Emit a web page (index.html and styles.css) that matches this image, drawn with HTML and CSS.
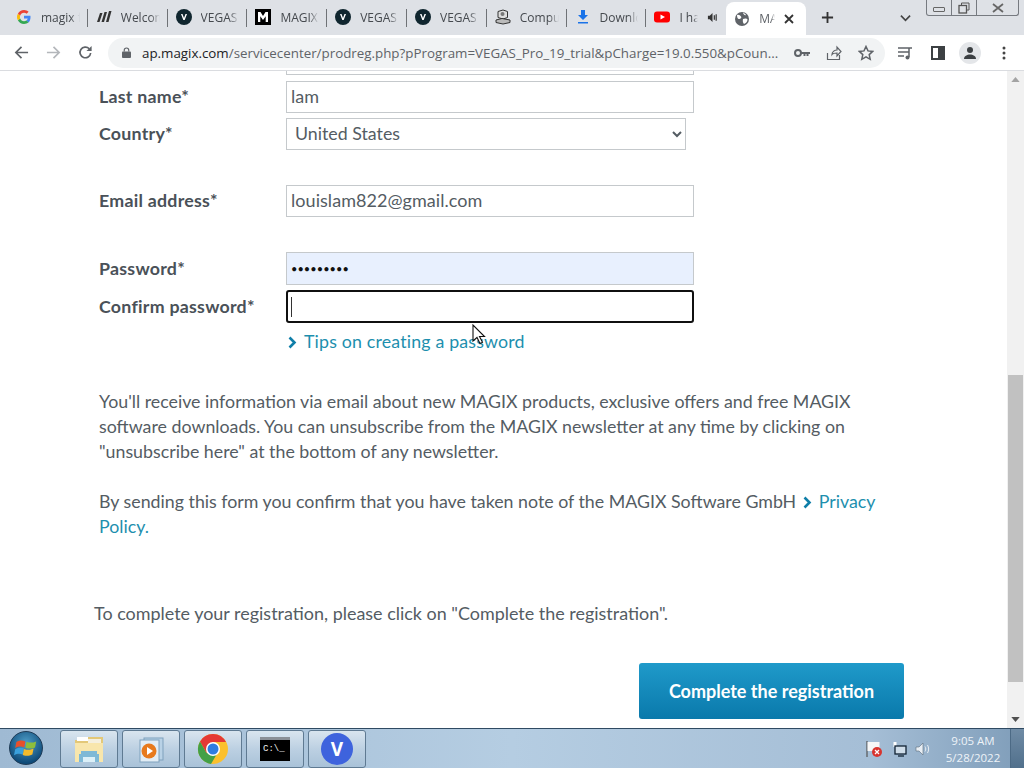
FILE: index.html
```html
<!DOCTYPE html>
<html lang="en">
<head>
  <meta charset="UTF-8">
  <title>MAGIX registration</title>
  <link rel="stylesheet" href="styles.css">
</head>
<body>

  <!-- tab strip -->
  <div class="tabstrip">
    <div class="tab">
      <svg class="favicon" viewBox="0 0 16 16"><path d="M14.5 8.2c0-.5 0-1-.1-1.4H8v2.8h3.7c-.2.9-.7 1.600-1.400 2.100l2.200 1.700c1.300-1.200 2-3 2-5.200z" fill="#4285f4"/><path d="M8 15c1.900 0 3.400-.6 4.500-1.700l-2.200-1.700c-.6.4-1.400.7-2.300.7-1.800 0-3.300-1.200-3.800-2.800L1.900 11.200C3 13.500 5.300 15 8 15z" fill="#34a853"/><path d="M4.200 9.500C4 9 3.900 8.500 3.900 8s.1-1 .3-1.500L1.900 4.800C1.300 5.800 1 6.900 1 8s.3 2.200.9 3.200z" fill="#fbbc05"/><path d="M8 3.800c1 0 1.900.3 2.600 1l2-2C11.400 1.700 9.900 1 8 1 5.300 1 3 2.500 1.900 4.800l2.300 1.700C4.700 5 6.200 3.800 8 3.800z" fill="#ea4335"/></svg>
      <span class="tab-title">magix free</span>
    </div>
    <div class="tab">
      <svg class="favicon" viewBox="0 0 16 16"><path d="M1 13 4 4h2.500L3.500 13zM5.500 13l3-10H11L8 13zM10 13l3-11h2.500L12.500 13z" fill="#333"/></svg>
      <span class="tab-title">Welcome</span>
    </div>
    <div class="tab">
      <svg class="favicon" viewBox="0 0 16 16"><circle cx="8" cy="8" r="8" fill="#10262f"/><path d="M5 5h1.500L8 9l1.500-4H11l-2.300 6H7.300z" fill="#fff"/></svg>
      <span class="tab-title">VEGAS Pro</span>
    </div>
    <div class="tab">
      <svg class="favicon" viewBox="0 0 16 16"><rect width="16" height="16" fill="#000"/><path d="M3 13V3h2.500L8 7l2.500-4H13v10h-2.300V7.200L8 11 5.300 7.200V13z" fill="#fff"/></svg>
      <span class="tab-title">MAGIX Soft</span>
    </div>
    <div class="tab">
      <svg class="favicon" viewBox="0 0 16 16"><circle cx="8" cy="8" r="8" fill="#10262f"/><path d="M5 5h1.500L8 9l1.500-4H11l-2.300 6H7.300z" fill="#fff"/></svg>
      <span class="tab-title">VEGAS Pro</span>
    </div>
    <div class="tab">
      <svg class="favicon" viewBox="0 0 16 16"><circle cx="8" cy="8" r="8" fill="#10262f"/><path d="M5 5h1.500L8 9l1.500-4H11l-2.300 6H7.300z" fill="#fff"/></svg>
      <span class="tab-title">VEGAS Pro</span>
    </div>
    <div class="tab">
      <svg class="favicon" viewBox="0 0 16 16"><path d="M3 2.500 8 1l4.500 1.500v6L8 10 3 8.500z" fill="#ddd" stroke="#333"/><circle cx="7.500" cy="5" r="2" fill="#777"/><path d="M1 11l6-1.500 8 1.500v2.500L8 15l-7-1.500z" fill="#bbb" stroke="#333"/></svg>
      <span class="tab-title">Computer</span>
    </div>
    <div class="tab">
      <svg class="favicon" viewBox="0 0 16 16"><path d="M6 1h4v5h3L8 11 3 6h3zM3 13h10v1.500H3z" fill="#1a73e8"/></svg>
      <span class="tab-title">Downloads</span>
    </div>
    <div class="tab tab-audio">
      <svg class="favicon" viewBox="0 0 16 16"><rect y="2.500" width="16" height="11" rx="3" fill="#f00"/><path d="M6.500 5.500 11 8l-4.500 2.500z" fill="#fff"/></svg>
      <span class="tab-title">I have</span>
      <svg class="tab-speaker" viewBox="0 0 12 12"><path d="M1 4h2l3-3v10L3 8H1z" fill="#333"/><path d="M8 3.500v5M10 2.500v7" stroke="#333" stroke-width="1.300"/></svg>
    </div>
    <div class="tab tab-active">
      <svg class="favicon" viewBox="0 0 16 16"><circle cx="8" cy="8" r="7" fill="#5f6368"/><path d="M3 4c2-.5 3 .5 4 1.500S6.500 8 5 8 3 6 3 4zM9 8c2-1 4-.5 4.500.5 0 2-1.500 4-3.500 4.500-1-1-1.500-3-1-5zM9 1.500c1 .5 2 1 3 2.500-1 .5-2.500 0-3-2.500z" fill="#fff"/></svg>
      <span class="tab-title">MAGIX</span>
      <svg class="tab-close" viewBox="0 0 10 10"><path d="M1 1l8 8M9 1l-8 8" stroke="#333" stroke-width="1.800"/></svg>
    </div>
    <svg class="new-tab" viewBox="0 0 14 14"><path d="M7 1v12M1 7h12" stroke="#333" stroke-width="2"/></svg>
    <svg class="tab-search" viewBox="0 0 12 8"><path d="M1 1.500l5 5 5-5" fill="none" stroke="#444" stroke-width="1.800"/></svg>
    <div class="window-controls">
      <div class="wc wc-min"><span class="wc-min-bar"></span></div>
      <div class="wc wc-max">
        <svg viewBox="0 0 12 12" width="12" height="12"><path d="M3.500 3.500V1h7.500v7H8.500" fill="none" stroke="#555"/><rect x="1" y="3.500" width="7.500" height="7.500" fill="none" stroke="#555" stroke-width="1.300"/></svg>
      </div>
      <div class="wc wc-close">
        <svg viewBox="0 0 12 10" width="12" height="10"><path d="M1 1l10 8M11 1L1 9" stroke="#666" stroke-width="1.800"/></svg>
      </div>
    </div>
  </div>

  <!-- toolbar -->
  <div class="toolbar">
    <svg class="tool tool-back" viewBox="0 0 16 16"><path d="M15 8H2M8 2 2 8l6 6" fill="none" stroke="#5f6368" stroke-width="1.800"/></svg>
    <svg class="tool tool-fwd" viewBox="0 0 16 16"><path d="M1 8h13M8 2l6 6-6 6" fill="none" stroke="#b4b7bb" stroke-width="1.800"/></svg>
    <svg class="tool tool-reload" viewBox="0 0 16 16"><path d="M13.500 8.500A5.700 5.700 0 1 1 12 4" fill="none" stroke="#5f6368" stroke-width="1.800"/><path d="M14.500 1v5.500H9z" fill="#5f6368"/></svg>
    <div class="omnibox">
      <svg class="omni-lock" viewBox="0 0 10 12"><path d="M2.500 5V3.500a2.500 2.500 0 0 1 5 0V5" fill="none" stroke="#5f6368" stroke-width="1.300"/><rect y="5" width="10" height="7" rx="1" fill="#5f6368"/></svg>
      <span class="omni-url"><span class="omni-host">ap.magix.com</span>/servicecenter/prodreg.php?pProgram=VEGAS_Pro_19_trial&amp;pCharge=19.0.550&amp;pCoun...</span>
      <svg class="omni-icon" viewBox="0 0 16 10" width="16" height="10"><circle cx="4" cy="5" r="3" fill="none" stroke="#5f6368" stroke-width="2"/><path d="M7 4h9v2h-1.500v2H12.500V6h-1v2H9.500V6H7z" fill="#5f6368"/></svg>
      <svg class="omni-icon" viewBox="0 0 16 16" width="16" height="16"><path d="M1.500 8v6.500h12V10M6 9.500c0-3 3-4.500 5-4.500V2l4 4.500-4 4.500V8c-2 0-4 0-5 1.500z" fill="none" stroke="#5f6368" stroke-width="1.200"/></svg>
      <svg class="omni-icon omni-star" viewBox="0 0 16 16" width="16" height="16"><path d="M8 1.500l2 4.400 4.700.5-3.500 3.200 1 4.700L8 11.900l-4.200 2.400 1-4.700L1.300 6.400 6 5.900z" fill="none" stroke="#5f6368" stroke-width="1.500"/></svg>
    </div>
    <svg class="tool tool-media" viewBox="0 0 16 16"><path d="M1 3h11M1 7h11M1 11h6" stroke="#5f6368" stroke-width="1.500"/><path d="M12 3h3M12 3v9" stroke="#5f6368" stroke-width="1.500"/><circle cx="10.500" cy="12.500" r="2" fill="#5f6368"/></svg>
    <svg class="tool tool-panel" viewBox="0 0 14 14"><rect x="1" y="1" width="12" height="12" fill="none" stroke="#3c4043" stroke-width="2"/><rect x="7" y="1" width="6" height="12" fill="#3c4043"/></svg>
    <div class="avatar">
      <svg viewBox="0 0 14 14" width="14" height="14"><circle cx="7" cy="4" r="3" fill="#3c4043"/><path d="M1 13c0-3 3-4.500 6-4.500s6 1.500 6 4.500z" fill="#3c4043"/></svg>
    </div>
    <svg class="tool tool-menu" viewBox="0 0 4 14"><circle cx="2" cy="2" r="1.500" fill="#444"/><circle cx="2" cy="7" r="1.500" fill="#444"/><circle cx="2" cy="12" r="1.500" fill="#444"/></svg>
  </div>

  <!-- page -->
  <div class="viewport">
    <div class="page">
      <div class="field-row row-cut">
        <span></span>
        <div class="cut-input"></div>
      </div>
      <div class="field-row row-last">
        <label class="field-label">Last name*</label>
        <input class="text-input" type="text" value="lam">
      </div>
      <div class="field-row row-country">
        <label class="field-label">Country*</label>
        <select class="select-input"><option>United States</option></select>
      </div>
      <div class="field-row row-email">
        <label class="field-label">Email address*</label>
        <input class="text-input" type="text" value="louislam822@gmail.com">
      </div>
      <div class="field-row row-pass">
        <label class="field-label">Password*</label>
        <input class="text-input input-autofill" type="password" value="123456789">
      </div>
      <div class="field-row row-confirm">
        <label class="field-label">Confirm password*</label>
        <div class="focus-input"><span class="caret"></span></div>
      </div>
      <div class="field-row row-tips">
        <span></span>
        <a class="link" href="#"><svg class="chev" viewBox="0 0 9 13" width="9" height="13"><path d="M1.500 1.500 6.500 6.500l-5 5" fill="none" stroke="#0f7ea8" stroke-width="2.600"/></svg>Tips on creating a password</a>
      </div>

      <p class="copy copy-first">You'll receive information via email about new MAGIX products, exclusive offers and free MAGIX software downloads. You can unsubscribe from the MAGIX newsletter at any time by clicking on "unsubscribe here" at the bottom of any newsletter.</p>
      <p class="copy copy-second">By sending this form you confirm that you have taken note of the MAGIX Software GmbH <a class="link" href="#"><svg class="chev" viewBox="0 0 9 13" width="9" height="13"><path d="M1.500 1.500 6.500 6.500l-5 5" fill="none" stroke="#0f7ea8" stroke-width="2.600"/></svg>Privacy Policy.</a></p>
      <p class="complete-note">To complete your registration, please click on "Complete the registration".</p>
      <div class="actions">
        <button class="submit-btn">Complete the registration</button>
      </div>

      <svg class="mouse-cursor" viewBox="0 0 14 22" width="14" height="22"><path d="M1 1v16l4-3.500 3 6 2.500-1.200-3-5.800h5z" fill="#fff" stroke="#111" stroke-width="1.100"/></svg>
    </div>
    <div class="scrollbar">
      <svg class="scroll-arrow" viewBox="0 0 10 6" width="9" height="5"><path d="M0 6l5-6 5 6z" fill="#a3a3a3"/></svg>
      <div class="scroll-track"><div class="scroll-thumb"></div></div>
      <svg class="scroll-arrow" viewBox="0 0 10 6" width="9" height="5"><path d="M0 0l5 6 5-6z" fill="#505050"/></svg>
    </div>
  </div>

  <!-- windows taskbar -->
  <div class="taskbar">
    <div class="start-orb">
      <svg viewBox="0 0 20 20" width="24" height="24"><path d="M2 5c3-1.500 5-1.500 7.500-.5L8.500 9.500C6 8.500 4 8.500 1 10z" fill="#e8502a"/><path d="M10.500 4.800c2.500 1 5 1 8 -.3l-1 5c-3 1.300-5 1.300-8 .3z" fill="#8dbf3c"/><path d="M1 11c3-1.500 5-1.500 7.300-.5l-1 5C5 14.500 3 14.500 0 16z" fill="#3aa0dc"/><path d="M8.300 10.800c3 1 5 1 8-.3l-1 5c-3 1.300-5 1.300-8 .3z" fill="#f4bb2c"/></svg>
    </div>
    <div class="task-btn">
      <svg viewBox="0 0 32 30" width="32" height="30"><path d="M2 6h10l2-3h16v24H2z" fill="#e3c878"/><rect x="4" y="3" width="11" height="4" fill="#fff"/><rect x="15" y="5" width="13" height="4" fill="#f5f0de"/><rect x="2" y="9" width="28" height="19" fill="#f8e6ac"/><path d="M8 17h16v3H8zM6 20h20v8H6z" fill="#7fb9d6"/><rect x="10" y="23" width="12" height="5" fill="#dcf0f8"/></svg>
    </div>
    <div class="task-btn">
      <svg viewBox="0 0 28 28" width="28" height="28"><rect x="7" y="3" width="19" height="22" fill="#b9d2e6" stroke="#7fa1bd"/><rect x="3" y="5" width="19" height="22" fill="#e2edf5" stroke="#7fa1bd"/><circle cx="12" cy="16" r="7.500" fill="#e77a1d"/><path d="M10 12l6 4-6 4z" fill="#fff"/></svg>
    </div>
    <div class="task-btn">
      <svg viewBox="0 0 32 32" width="32" height="32"><circle cx="16" cy="16" r="15" fill="#fbc02d"/><path d="M16 1a15 15 0 0 0-13 7.500L9.500 20 16 9h13A15 15 0 0 0 16 1z" fill="#e53935"/><path d="M3 8.500A15 15 0 0 0 14 31l6.500-11H9.500z" fill="#43a047"/><circle cx="16" cy="16" r="7" fill="#fff"/><circle cx="16" cy="16" r="5.500" fill="#2f7de1"/></svg>
    </div>
    <div class="task-btn">
      <div class="cmd-icon">C:\_</div>
    </div>
    <div class="task-btn">
      <div class="vegas-icon">V</div>
    </div>
    <div class="tray">
      <svg viewBox="0 0 18 18" width="18" height="18"><path d="M2 1v16" stroke="#555" stroke-width="1.200"/><path d="M2.500 2h12v9h-12z" fill="#f7f7f7"/><circle cx="12" cy="12" r="5" fill="#d8342f"/><path d="M10 10l4 4M14 10l-4 4" stroke="#fff" stroke-width="1.300"/></svg>
      <svg viewBox="0 0 16 16" width="16" height="16"><path d="M4 1v5" stroke="#fff" stroke-width="3"/><rect x="4" y="5" width="11" height="8" fill="#cfdde9" stroke="#123" stroke-width="1.300"/><path d="M7 15h6" stroke="#123" stroke-width="1.300"/></svg>
      <svg viewBox="0 0 16 14" width="16" height="14"><path d="M1 5h3l4-4v12l-4-4H1z" fill="#e8eef4" stroke="#5b6b7a" stroke-width=".6"/><path d="M10 4.500c1 1.500 1 3.500 0 5M12.500 3c1.500 2.500 1.500 5.500 0 8" fill="none" stroke="#e8eef4" stroke-width="1"/></svg>
    </div>
    <div class="clock">
      <div>9:05 AM</div>
      <div>5/28/2022</div>
    </div>
    <div class="show-desktop"></div>
  </div>

</body>
</html>
```
FILE: styles.css
```css
* {
  margin: 0;
  padding: 0;
  box-sizing: border-box;
}

body {
  width: 1024px;
  height: 768px;
  display: flex;
  flex-direction: column;
  overflow: hidden;
  background: #fff;
  font-family: 'Lato', sans-serif;
}

/* Tab strip */
.tabstrip {
  position: relative;
  height: 35px;
  flex: none;
  display: flex;
  align-items: center;
  padding-left: 8px;
  background: #dee1e6;
}

.tab {
  position: relative;
  width: 79.8px;
  height: 35px;
  flex: none;
  display: flex;
  align-items: center;
  gap: 9px;
  padding: 0 8px 1px 8px;
}

.tab::after {
  content: "";
  position: absolute;
  right: 0;
  top: 9px;
  height: 18px;
  width: 1px;
  background: #6f7276;
}

.tab-audio::after,
.tab-active::after {
  display: none;
}

.favicon {
  width: 16px;
  height: 16px;
  flex: none;
}

.tab-title {
  flex: 1;
  min-width: 0;
  overflow: hidden;
  white-space: nowrap;
  font-family: 'Open Sans', sans-serif;
  font-size: 12px;
  color: #45494e;
  -webkit-mask-image: linear-gradient(90deg, #000 75%, transparent);
  mask-image: linear-gradient(90deg, #000 75%, transparent);
}

.tab-speaker {
  width: 11px;
  height: 11px;
  flex: none;
}

.tab-active {
  background: #fff;
  border-radius: 8px 8px 0 0;
  height: 33px;
  margin-top: 2px;
  padding-bottom: 0;
}

.tab-active .tab-title {
  color: #5f6368;
}

.tab-close {
  width: 10px;
  height: 10px;
  flex: none;
  margin-right: 4px;
}

.new-tab {
  width: 13px;
  height: 13px;
  margin-left: 15px;
  flex: none;
}

.tab-search {
  width: 11px;
  height: 8px;
  margin-left: 66px;
  flex: none;
}

.window-controls {
  position: absolute;
  top: 0;
  right: 5px;
  height: 16px;
  display: flex;
  border: 1px solid #767a80;
  border-top: none;
  border-radius: 0 0 3px 3px;
}

.wc {
  display: flex;
  align-items: center;
  justify-content: center;
}

.wc-min {
  width: 25px;
  border-right: 1px solid #767a80;
}

.wc-min-bar {
  width: 12px;
  height: 5px;
  border: 1px solid #666;
  border-radius: 1px;
  margin-top: 3px;
}

.wc-max {
  width: 25px;
  border-right: 1px solid #767a80;
}

.wc-close {
  width: 41px;
}

/* Toolbar */
.toolbar {
  height: 36px;
  flex: none;
  display: flex;
  align-items: center;
  background: #fff;
  border-bottom: 1px solid #dadce0;
}

.tool {
  flex: none;
}

.tool-back {
  width: 15px;
  height: 15px;
  margin-left: 14px;
}

.tool-fwd {
  width: 15px;
  height: 15px;
  margin-left: 17px;
}

.tool-reload {
  width: 15px;
  height: 15px;
  margin-left: 17px;
}

.omnibox {
  width: 777px;
  height: 30px;
  margin-left: 15px;
  flex: none;
  display: flex;
  align-items: center;
  padding-left: 14px;
  border-radius: 15px;
  background: #f1f3f4;
}

.omni-lock {
  width: 9px;
  height: 11px;
  flex: none;
}

.omni-url {
  width: 636px;
  margin-left: 11px;
  flex: none;
  font-family: 'Open Sans', sans-serif;
  font-size: 13.35px;
  white-space: nowrap;
  overflow: hidden;
  color: #5f6368;
}

.omni-host {
  color: #202124;
}

.omni-icon {
  flex: none;
  margin-left: 16px;
}

.tool-media {
  width: 16px;
  height: 16px;
  margin-left: 12px;
}

.tool-panel {
  width: 14px;
  height: 14px;
  margin-left: 18px;
}

.avatar {
  width: 22px;
  height: 22px;
  margin-left: 14px;
  flex: none;
  display: flex;
  align-items: center;
  justify-content: center;
  border-radius: 50%;
  background: #e4e6e9;
}

.tool-menu {
  width: 4px;
  height: 14px;
  margin-left: 21px;
}

/* Page */
.viewport {
  flex: 1;
  min-height: 0;
  display: flex;
}

.page {
  position: relative;
  flex: 1;
  min-width: 0;
  padding-left: 99px;
  font-size: 17.8px;
  color: #545c63;
}

.field-row {
  display: grid;
  grid-template-columns: 187px 1fr;
  align-items: center;
}

.row-cut {
  height: 4px;
}

.cut-input {
  width: 408px;
  height: 4px;
  border: 1px solid #c5c9cc;
  border-top: none;
}

.row-last {
  margin-top: 6px;
}

.row-country {
  margin-top: 5px;
}

.row-email {
  margin-top: 35px;
}

.row-pass {
  margin-top: 35px;
}

.row-confirm {
  margin-top: 5px;
}

.row-tips {
  margin-top: 6px;
}

.field-label {
  padding-bottom: 2px;
  font-weight: 700;
  letter-spacing: 0.25px;
  color: #4a5158;
}

.text-input {
  width: 408px;
  height: 32px;
  padding: 0 4px 2px;
  border: 1px solid #c5c9cc;
  background: #fff;
  font-family: inherit;
  font-size: 18px;
  letter-spacing: 0.05px;
  color: #545c63;
  outline: none;
}

.input-autofill {
  height: 33px;
  padding-bottom: 0;
  background: #e8f0fe;
  font-size: 11px;
  color: #111;
}

.select-input {
  width: 400px;
  height: 32px;
  padding: 0 0 2px 4px;
  border: 1px solid #c5c9cc;
  border-radius: 0;
  background: #fff;
  font-family: inherit;
  font-size: 17.8px;
  color: #545c63;
  outline: none;
}

.focus-input {
  width: 408px;
  height: 33px;
  display: flex;
  align-items: center;
  padding-left: 3px;
  border: 2px solid #101010;
  border-radius: 3px;
  background: #fff;
}

.caret {
  width: 1px;
  height: 20px;
  background: #333;
}

.link {
  color: #1d8fae;
  text-decoration: none;
}

.chev {
  margin: 0 7px 0 2px;
  vertical-align: -1px;
}

.row-tips .link {
  line-height: 24px;
  letter-spacing: 0.17px;
}

.copy {
  width: 790px;
  line-height: 25px;
}

.copy-first {
  margin-top: 36px;
}

.copy-second {
  margin-top: 25px;
}

.complete-note {
  margin-top: 62px;
  margin-left: -5px;
  line-height: 25px;
  font-size: 17.95px;
}

.actions {
  width: 805px;
  margin-top: 37px;
  display: flex;
  justify-content: flex-end;
}

.submit-btn {
  width: 265px;
  height: 56px;
  border: none;
  border-radius: 3px;
  background: linear-gradient(180deg, #1f9aca, #0a79ab);
  color: #fff;
  font-family: inherit;
  font-size: 18px;
  font-weight: 700;
}

.mouse-cursor {
  position: absolute;
  left: 472px;
  top: 253px;
}

/* Scrollbar */
.scrollbar {
  width: 17px;
  flex: none;
  display: flex;
  flex-direction: column;
  align-items: center;
  padding: 6px 0;
  background: #f1f1f1;
}

.scroll-arrow {
  flex: none;
}

.scroll-track {
  flex: 1;
  width: 100%;
  padding-top: 293px;
}

.scroll-thumb {
  width: 15px;
  height: 307px;
  margin-left: 1px;
  background: #c1c1c1;
}

/* Taskbar */
.taskbar {
  position: relative;
  height: 40px;
  flex: none;
  display: flex;
  align-items: center;
  padding-left: 60px;
  gap: 4px;
  border-top: 1px solid #2f4a62;
  background: linear-gradient(90deg, #9fbad3, #b5cde2 50%, #a5bed6 85%, #7f9db9);
}

.start-orb {
  position: absolute;
  left: 9px;
  top: 2px;
  width: 34px;
  height: 34px;
  display: flex;
  align-items: center;
  justify-content: center;
  border: 1px solid #1d3a55;
  border-radius: 50%;
  background: radial-gradient(circle at 50% 35%, #4f9fc9, #0e4a78 75%);
}

.task-btn {
  width: 58px;
  height: 38px;
  display: flex;
  align-items: center;
  justify-content: center;
  border: 1px solid #5f7a92;
  border-radius: 3px;
  background: linear-gradient(180deg, #d9e5ef, #bcd0e2 50%, #a9c2d8);
}

.cmd-icon {
  width: 30px;
  height: 24px;
  padding: 5px 0 0 3px;
  background: #000;
  border-top: 3px solid #8a8f96;
  font-family: 'Liberation Mono', monospace;
  font-size: 9px;
  line-height: 9px;
  color: #eee;
}

.vegas-icon {
  width: 32px;
  height: 32px;
  display: flex;
  align-items: center;
  justify-content: center;
  border-radius: 50%;
  background: #3e63dd;
  color: #fff;
  font-family: 'Open Sans', sans-serif;
  font-size: 19px;
  font-weight: 700;
}

.tray {
  margin-left: auto;
  display: flex;
  align-items: center;
  gap: 8px;
}

.clock {
  width: 72px;
  margin: 0 1px 0 2px;
  text-align: center;
  font-family: 'Open Sans', sans-serif;
  font-size: 11.5px;
  line-height: 17px;
  color: #eef3f8;
}

.show-desktop {
  width: 14px;
  height: 39px;
  flex: none;
  margin-right: 0;
  margin-left: -4px;
  border-left: 1px solid #4c6a85;
  background: linear-gradient(180deg, #6f8ba5, #51708c);
}
```
